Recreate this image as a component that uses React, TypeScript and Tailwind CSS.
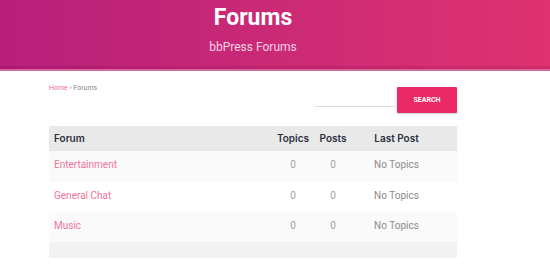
import React from "react";

const rows = ["Entertainment", "General Chat", "Music"];

export default function App() {
  return (
    <div className="w-[550px] h-[272px] bg-white overflow-hidden" style={{ fontFamily: "Roboto, 'Liberation Sans', sans-serif" }}>
      <div className="h-[71px] bg-gradient-to-r from-[#b71f7b] to-[#df326f] border-b-[2px] border-[#d06a9c] shadow-[inset_0_-3px_0_rgba(120,0,60,0.15)]">
        <div className="w-[408px] ml-[49px] flex flex-col items-center pt-[4px]">
          <div className="text-white font-bold text-[23px] leading-[28px]">Forums</div>
          <div className="text-[#f6d3e4] text-[12px] leading-[14px] mt-[8px]">bbPress Forums</div>
        </div>
      </div>
      <div className="w-[408px] ml-[49px]">
        <div className="flex justify-between items-start mt-[16px] h-[26px]">
          <div className="text-[7px] leading-[8px] mt-[-3px] text-[#888]">
            <span className="text-[#ee6b93]">Home</span> › Forums
          </div>
          <div className="flex items-end h-[26px]">
            <div className="w-[80px] border-b border-[#dcdcdc] mb-[6px] mr-[2px]"></div>
            <button className="w-[60px] h-[26px] bg-[#e92a67] text-white text-[7px] font-bold rounded-[1px] shadow-[0_1px_2px_rgba(0,0,0,0.2)]">SEARCH</button>
          </div>
        </div>
        <div className="mt-[13px]">
          <div className="grid grid-cols-[224px_40px_40px_87px] h-[25px] items-center bg-[#e9e9e9] text-[10px] font-semibold text-[#2a3140]" style={{ fontFamily: "Inter, 'Liberation Sans', sans-serif" }}>
            <div className="pl-[5px]">Forum</div>
            <div className="text-center">Topics</div>
            <div className="text-center">Posts</div>
            <div className="text-center">Last Post</div>
          </div>
          {rows.map((r, i) => (
            <div key={r} className={`grid grid-cols-[224px_40px_40px_87px] ${i === 0 ? "h-[31px]" : "h-[30px]"} items-center pb-[4px] text-[10px] ${i % 2 === 0 ? "bg-[#fafafa]" : "bg-white"}`}>
              <div className="pl-[5px] text-[#f07499]">{r}</div>
              <div className="text-center text-[#a0a0a0]">0</div>
              <div className="text-center text-[#a0a0a0]">0</div>
              <div className="text-center text-[#8c8c8c]">No Topics</div>
            </div>
          ))}
          <div className="h-[16px] bg-[#f2f2f2]"></div>
        </div>
      </div>
    </div>
  );
}
